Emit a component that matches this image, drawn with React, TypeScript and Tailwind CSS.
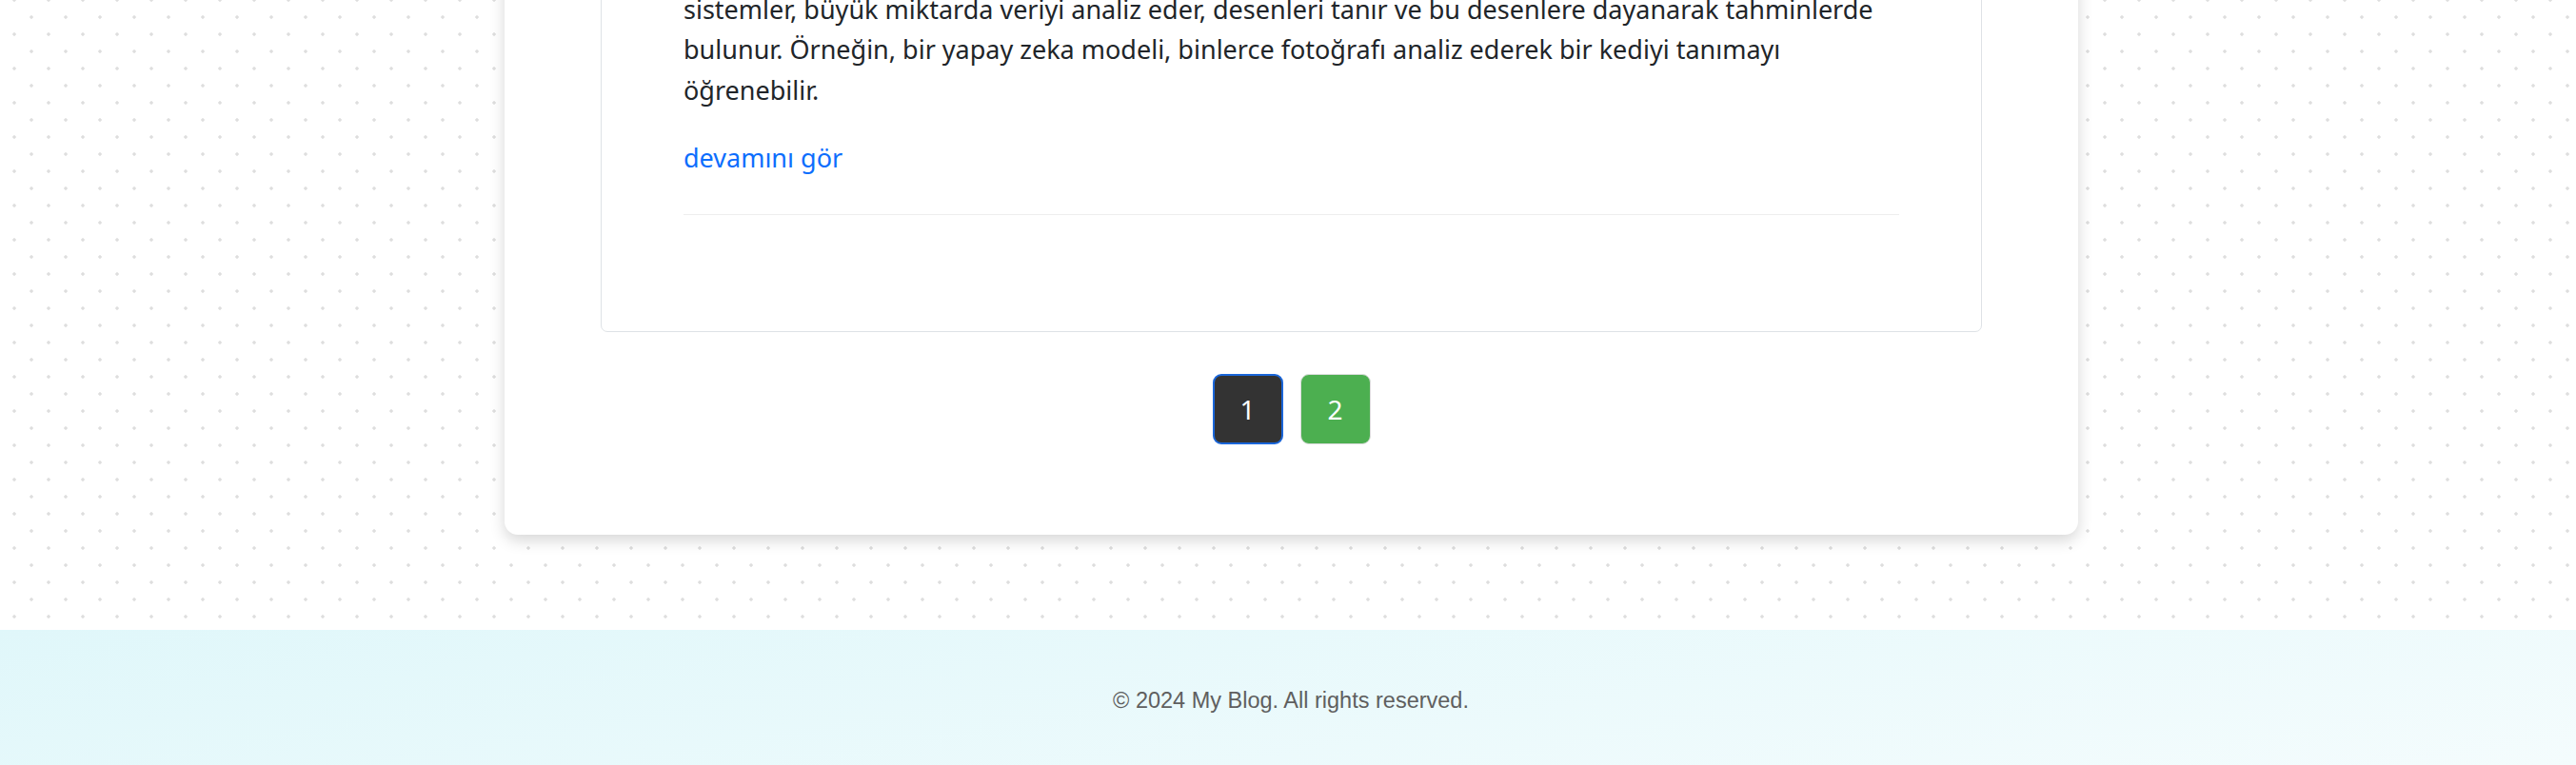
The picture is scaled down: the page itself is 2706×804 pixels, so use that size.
import React from "react";

export default function App() {
  const body = '"Segoe UI", "Noto Sans", "Open Sans", sans-serif';
  return (
    <div className="w-[2706px] h-[804px] overflow-hidden bg-white flex flex-col">
      <div className="h-[662px] shrink-0 overflow-hidden flex flex-col justify-end pb-[100px] bg-[radial-gradient(circle,#dedede_1.4px,transparent_2px),radial-gradient(circle,#dedede_1.4px,transparent_2px)] bg-[length:36px_36px] bg-[position:-3px_-18px,15px_0px]">
        <div
          className="ml-[530px] w-[1653px] shrink-0 bg-white rounded-[14px] shadow-[0_6px_16px_rgba(0,0,0,0.16)] px-[101px] pb-[95px] pt-[80px]"
          style={{ fontFamily: body }}
        >
          <div className="border border-[#dee2e6] rounded-[7px] px-[86px] pt-[86px] pb-[122px]">
            <p className="text-[27px] leading-[42.5px] text-[#212529]">
              <span className="block whitespace-nowrap">
                sistemler, büyük miktarda veriyi analiz eder, desenleri tanır ve bu desenlere dayanarak tahminlerde
              </span>
              <span className="block whitespace-nowrap">
                bulunur. Örneğin, bir yapay zeka modeli, binlerce fotoğrafı analiz ederek bir kediyi tanımayı
              </span>
              <span className="block whitespace-nowrap">öğrenebilir.</span>
            </p>
            <a
              href="#"
              className="block mt-[28px] text-[27px] leading-[43px] text-[#0d6efd] w-fit"
            >
              devamını gör
            </a>
            <div className="mt-[38px] h-px bg-[#eeeeee]" />
          </div>
          <div className="mt-[44px] flex justify-center gap-[18px]">
            <button className="w-[74px] h-[74px] rounded-[9px] bg-[#333333] border-2 border-[#1a66d9] text-white text-[28px] flex items-center justify-center">
              1
            </button>
            <button className="w-[74px] h-[74px] rounded-[9px] bg-[#4caf50] border border-[#dddddd] text-white text-[28px] flex items-center justify-center">
              2
            </button>
          </div>
        </div>
      </div>
      <footer className="h-[142px] shrink-0 flex items-center justify-center pl-[6px] bg-[linear-gradient(170deg,#e0f7fa,#f4fcfd)]">
        <p
          className="text-[23.5px] text-[#5f5f5f] pt-[8px]"
          style={{ fontFamily: '"Liberation Sans", Arial, sans-serif' }}
        >
          © 2024 My Blog. All rights reserved.
        </p>
      </footer>
    </div>
  );
}
